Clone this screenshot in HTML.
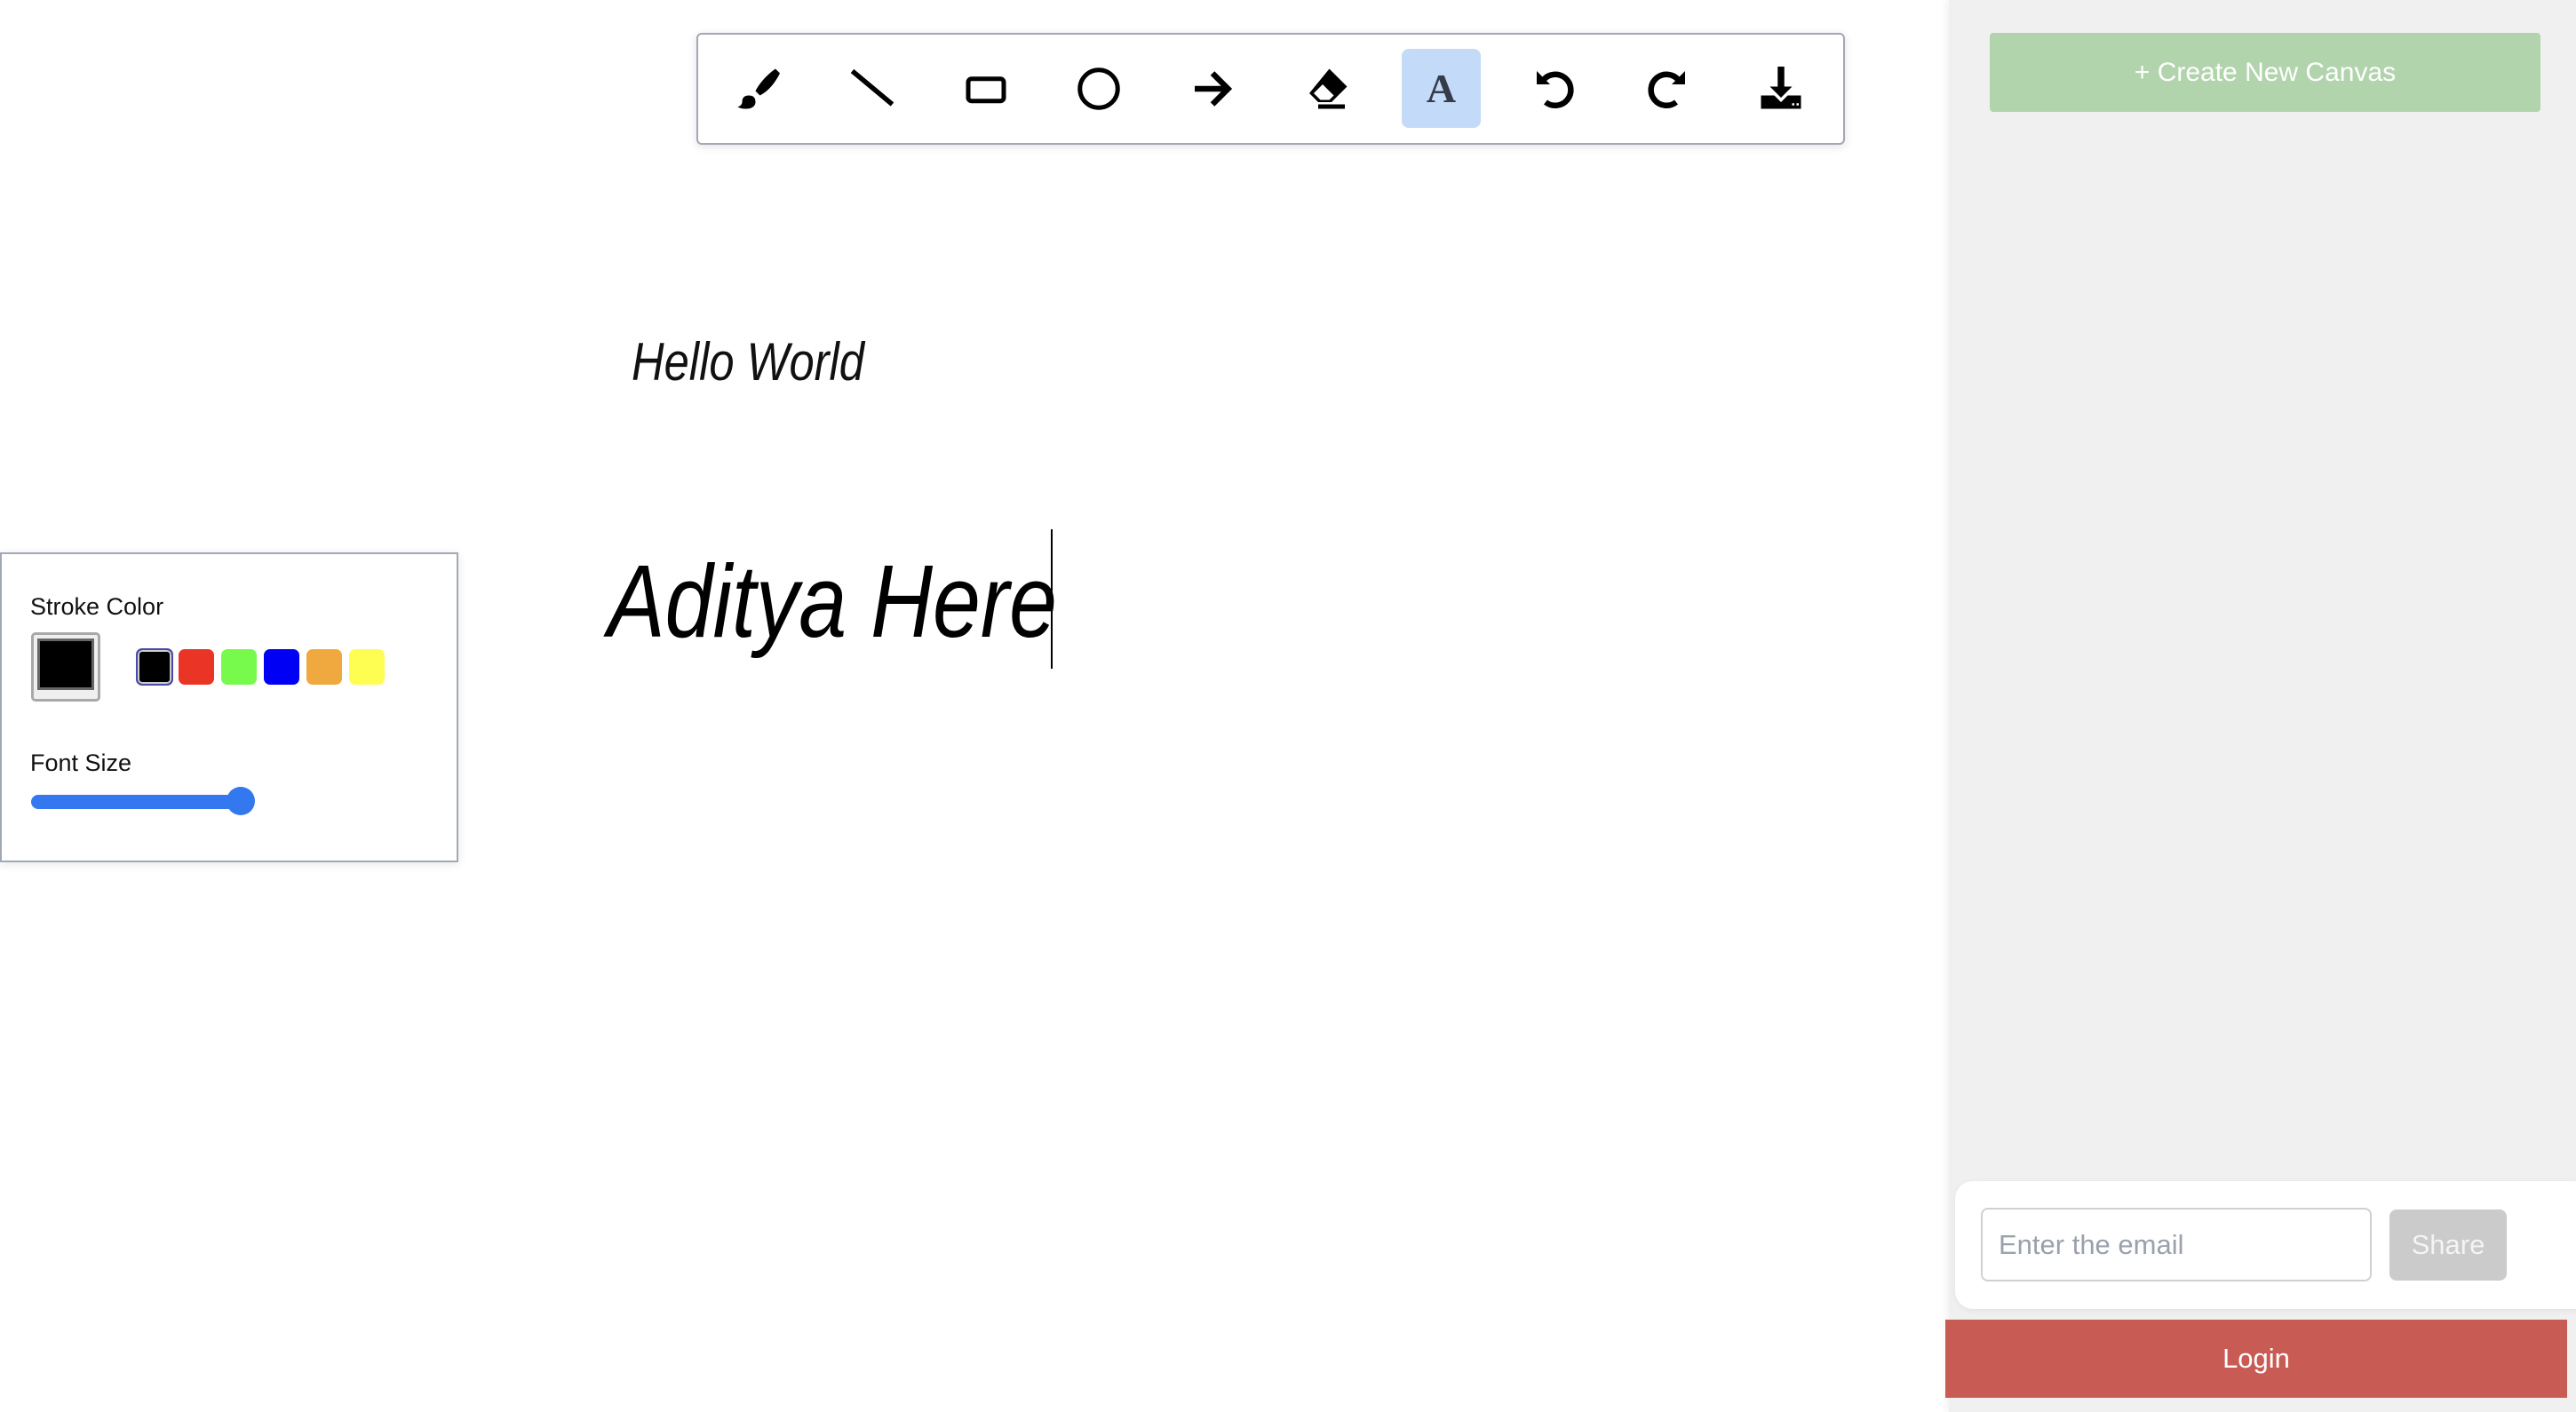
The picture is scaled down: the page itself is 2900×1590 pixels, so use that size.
<!DOCTYPE html>
<html><head><meta charset="utf-8"><style>
body{margin:0;width:2900px;height:1590px;background:#fff;position:relative;overflow:hidden;font-family:"Liberation Sans",sans-serif}
.abs{position:absolute}
.tb{left:784px;top:37px;width:1289px;height:122px;border:2px solid #a3a8b5;border-radius:6px;background:#fff;box-shadow:0 2px 10px rgba(0,0,0,.12)}
.ic{position:absolute;top:100px;width:60px;height:60px;margin:-30px 0 0 -30px}
.hl{left:1578px;top:55px;width:89px;height:89px;background:#c3daf8;border-radius:8px}
.side{left:2194px;top:0;width:706px;height:1590px;background:#f0f0f0;box-shadow:-3px 0 8px rgba(0,0,0,.06)}
.panel{left:0;top:622px;width:512px;height:345px;border:2px solid #a3a8b5;background:#fff;box-shadow:0 2px 10px rgba(0,0,0,.1)}
.lbl{font-size:27px;color:#111}
.sw{top:731px;width:40px;height:40px;border-radius:7px}
</style></head><body>
<div class="abs tb"></div>
<div class="abs hl"></div>
<svg class="ic" style="left:853px" viewBox="0 0 24 24"><path d="M20 3c-3 2-7 6-9 10l2 2c4-2 7-6 9-10z M8 15c-2 0-3 1-3 3 0 1-1 2-2 2 1 1 3 1 4 1 2 0 4-1 4-3 0-2-1-3-3-3z" fill="#000"/></svg>
<svg class="ic" style="left:982px" viewBox="0 0 24 24"><path d="M3 4L21 19" stroke="#000" stroke-width="2.2"/></svg>
<svg class="ic" style="left:1110px" viewBox="0 0 24 24"><rect x="4" y="7.5" width="16" height="10" rx="1.5" fill="none" stroke="#000" stroke-width="2"/></svg>
<svg class="ic" style="left:1237px" viewBox="0 0 24 24"><circle cx="12" cy="12" r="8.5" fill="none" stroke="#000" stroke-width="2"/></svg>
<svg class="ic" style="left:1365px" viewBox="0 0 24 24"><path d="M4 12h14M12 5l7 7-7 7" fill="none" stroke="#000" stroke-width="2.6"/></svg>
<svg class="ic" style="left:1494px" viewBox="0 0 24 24"><path d="M13 3l8 8-7 7H8l-4-4z M6 14l3 3h4l2-2-5-5z" fill="#000" fill-rule="evenodd"/><path d="M8 20h12" stroke="#000" stroke-width="2"/></svg>
<div class="abs" style="left:1578px;top:55px;width:89px;height:89px;text-align:center;font:bold 46px 'Liberation Serif',serif;line-height:89px;color:#363b4a">A</div>
<svg class="ic" style="left:1750px" viewBox="0 0 24 24"><path d="M7 8a7 7 0 1 1 1 10" fill="none" stroke="#000" stroke-width="2.6"/><path d="M4 4v6h6z" fill="#000"/></svg>
<svg class="ic" style="left:1877px" viewBox="0 0 24 24"><path d="M17 8a7 7 0 1 0-1 10" fill="none" stroke="#000" stroke-width="2.6"/><path d="M20 4v6h-6z" fill="#000"/></svg>
<svg class="ic" style="left:2005px" viewBox="0 0 24 24"><path d="M10.5 2h3v9h3.5l-5 5-5-5h3.5z M3 15h6l3 3 3-3h6v6H3z" fill="#000"/><rect x="17" y="18.5" width="1" height="1" fill="#fff"/><rect x="19" y="18.5" width="1" height="1" fill="#fff"/></svg>

<svg class="abs" style="left:0;top:0" width="1400" height="800">
<text x="711" y="428" textLength="262" lengthAdjust="spacingAndGlyphs" font-family="Liberation Sans" font-style="italic" font-size="60" fill="#111">Hello  World</text>
<text x="684" y="717" textLength="506" lengthAdjust="spacingAndGlyphs" font-family="Liberation Sans" font-style="italic" font-size="116" fill="#000">Aditya Here</text>
<rect x="1183" y="596" width="2" height="157" fill="#000"/>
</svg>

<div class="abs panel"></div>
<div class="abs lbl" style="left:34px;top:668px">Stroke Color</div>
<div class="abs" style="left:35px;top:712px;width:72px;height:72px;border:3px solid #a8a8a8;border-radius:5px;background:#efefef"></div>
<div class="abs" style="left:42px;top:719px;background:#000;border:3px solid #666;box-sizing:border-box;width:64px;height:58px"></div>
<div class="abs sw" style="left:153px;background:#000;border:2px solid #4a4aa8;box-shadow:inset 0 0 0 2px #ccc;box-sizing:border-box;width:42px;height:42px;top:730px"></div>
<div class="abs sw" style="left:201px;background:#e93426"></div>
<div class="abs sw" style="left:249px;background:#78fa4c"></div>
<div class="abs sw" style="left:297px;background:#0000f5"></div>
<div class="abs sw" style="left:345px;background:#f0a93e"></div>
<div class="abs sw" style="left:393px;background:#fefd52"></div>
<div class="abs lbl" style="left:34px;top:844px">Font Size</div>
<div class="abs" style="left:35px;top:895px;width:250px;height:16px;border-radius:8px;background:#3478f0"></div>
<div class="abs" style="left:255px;top:886px;width:32px;height:32px;border-radius:50%;background:#3478f0"></div>

<div class="abs side"></div>
<div class="abs" style="left:2240px;top:37px;width:620px;height:89px;background:#b2d4ad;border-radius:4px;color:#fff;font-size:30px;line-height:89px;text-align:center">+ Create New Canvas</div>
<div class="abs" style="left:2201px;top:1330px;width:720px;height:144px;background:#fff;border-radius:20px;box-shadow:0 2px 8px rgba(0,0,0,.06)"></div>
<div class="abs" style="left:2230px;top:1360px;width:440px;height:83px;border:2px solid #d0d0d4;border-radius:8px;box-sizing:border-box;color:#9aa1ad;font-size:31px;line-height:79px;padding-left:18px">Enter the email</div>
<div class="abs" style="left:2690px;top:1362px;width:132px;height:80px;background:#cbcbcb;border-radius:8px;color:#f4f4f4;font-size:31px;line-height:80px;text-align:center">Share</div>
<div class="abs" style="left:2190px;top:1486px;width:700px;height:88px;background:#c85c55;color:#fff;font-size:31px;line-height:88px;text-align:center">Login</div>
</body></html>
